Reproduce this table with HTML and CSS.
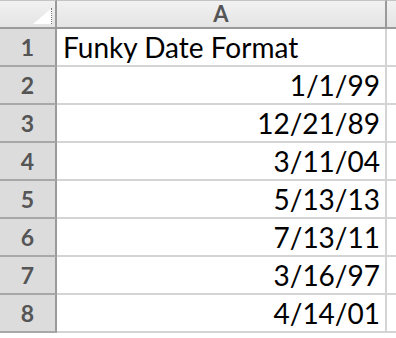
FILE: index.html
```html
<!DOCTYPE html>
<html lang="en">
<head>
    <meta charset="UTF-8">
    <title>Sheet1</title>
    <link rel="stylesheet" href="styles.css">
</head>
<body>
    <div class="sheet">
        <div class="corner"><span class="corner-mark"></span></div>
        <div class="col-head">A</div>
        <div class="col-head col-rest"></div>

        <div class="row-head">1</div>
        <div class="cell">Funky Date Format</div>
        <div class="cell col-rest"></div>

        <div class="row-head">2</div>
        <div class="cell num">1/1/99</div>
        <div class="cell col-rest"></div>

        <div class="row-head">3</div>
        <div class="cell num">12/21/89</div>
        <div class="cell col-rest"></div>

        <div class="row-head">4</div>
        <div class="cell num">3/11/04</div>
        <div class="cell col-rest"></div>

        <div class="row-head">5</div>
        <div class="cell num">5/13/13</div>
        <div class="cell col-rest"></div>

        <div class="row-head">6</div>
        <div class="cell num">7/13/11</div>
        <div class="cell col-rest"></div>

        <div class="row-head">7</div>
        <div class="cell num">3/16/97</div>
        <div class="cell col-rest"></div>

        <div class="row-head">8</div>
        <div class="cell num">4/14/01</div>
        <div class="cell col-rest"></div>
    </div>
</body>
</html>
```

FILE: styles.css
```css
body {
    margin: 0;
    background: #fff;
    font-family: Lato, "Liberation Sans", sans-serif;
}
.sheet {
    display: grid;
    grid-template-columns: 57px 330px 1fr;
    grid-template-rows: 29px repeat(8, 38px);
    width: 396px;
}
.sheet > div {
    box-sizing: border-box;
}
.corner,
.col-head {
    background: linear-gradient(#f1f1f1, #e4e4e4);
    border-top: 1px solid #c4c4c4;
    border-bottom: 2px solid #9a9a9a;
    border-right: 2px solid #9a9a9a;
}
.corner {
    position: relative;
}
.corner-mark {
    position: absolute;
    right: 3px;
    bottom: 3px;
    width: 0;
    height: 0;
    border-left: 19px solid transparent;
    border-bottom: 16px solid #fff;
}
.corner-mark::after {
    content: "";
    position: absolute;
    right: 0;
    top: 0;
    width: 2px;
    height: 16px;
    border-right: 1px dotted #777;
}
.col-head {
    color: #555;
    font-size: 22px;
    font-weight: bold;
    text-align: center;
    line-height: 26px;
}
.col-head.col-rest {
    border-right: none;
}
.row-head {
    background: #dcdcdc;
    color: #555;
    font-size: 23px;
    font-weight: bold;
    text-align: center;
    line-height: 36px;
    border-right: 2px solid #9a9a9a;
    border-bottom: 2px solid #a8a8a8;
}
.cell {
    font-size: 28px;
    color: #000;
    padding: 0 5px 0 6px;
    line-height: 36px;
    border-right: 2px solid #d4d4d4;
    border-bottom: 2px solid #d4d4d4;
    white-space: nowrap;
}
.cell.num {
    text-align: right;
}
.cell.col-rest {
    border-right: none;
}
```
